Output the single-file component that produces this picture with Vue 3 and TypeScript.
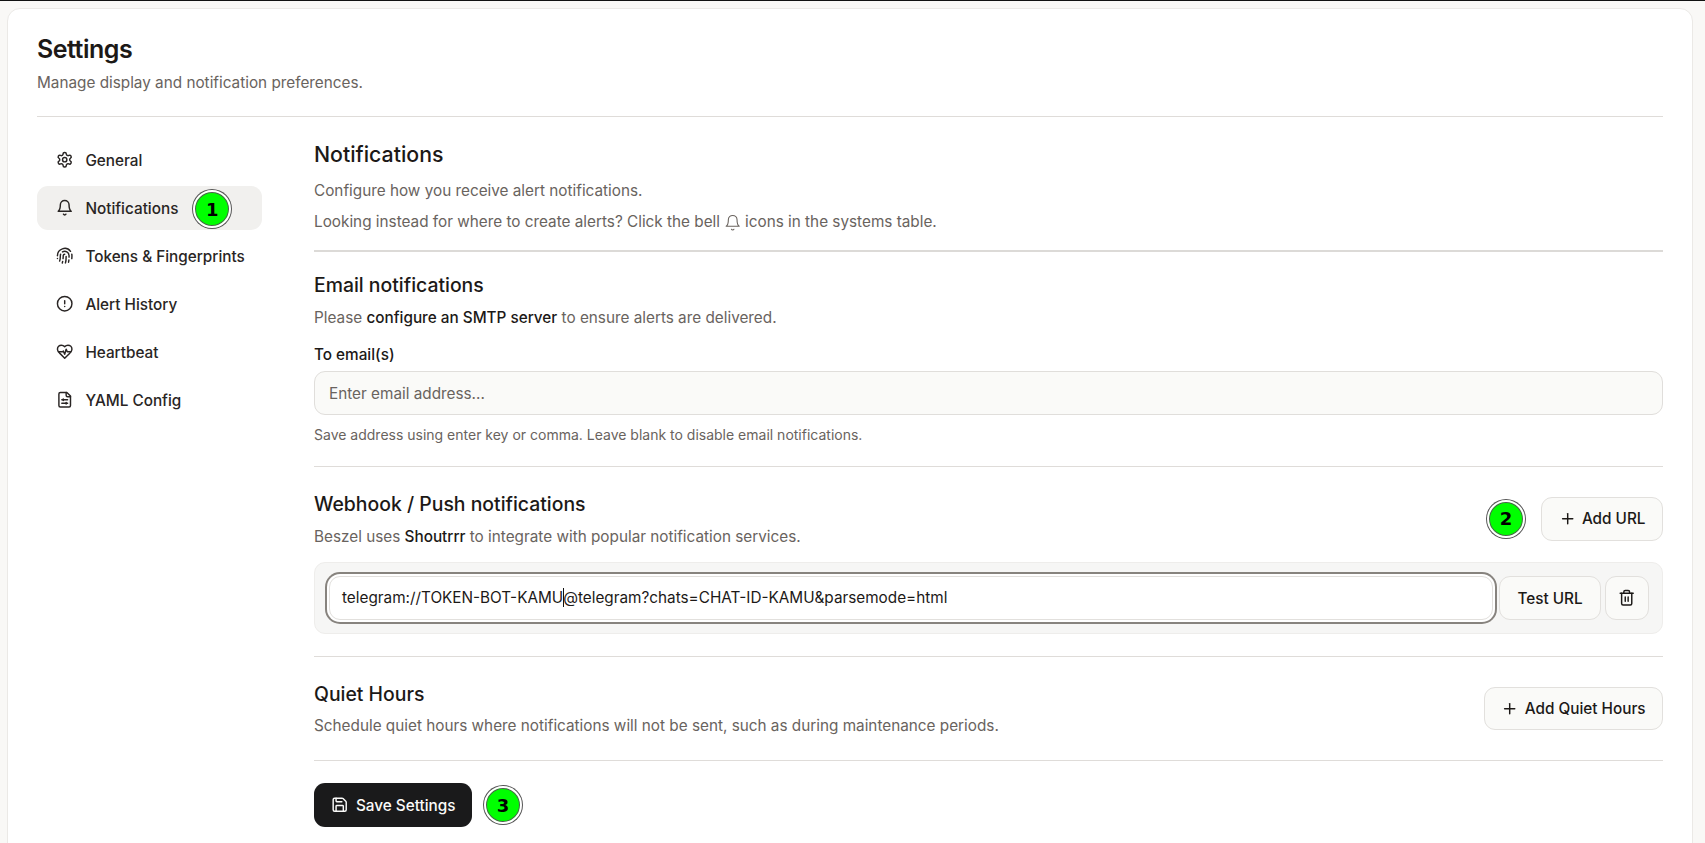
<script setup lang="ts">
const icons: Record<string, string[]> = {
  settings: [
    "M12.22 2h-.44a2 2 0 0 0-2 2v.18a2 2 0 0 1-1 1.73l-.43.25a2 2 0 0 1-2 0l-.15-.08a2 2 0 0 0-2.73.73l-.22.38a2 2 0 0 0 .73 2.73l.15.1a2 2 0 0 1 1 1.72v.51a2 2 0 0 1-1 1.74l-.15.09a2 2 0 0 0-.73 2.73l.22.38a2 2 0 0 0 2.73.73l.15-.08a2 2 0 0 1 2 0l.43.25a2 2 0 0 1 1 1.73V20a2 2 0 0 0 2 2h.44a2 2 0 0 0 2-2v-.18a2 2 0 0 1 1-1.73l.43-.25a2 2 0 0 1 2 0l.15.08a2 2 0 0 0 2.73-.73l.22-.39a2 2 0 0 0-.73-2.73l-.15-.08a2 2 0 0 1-1-1.74v-.5a2 2 0 0 1 1-1.74l.15-.09a2 2 0 0 0 .73-2.73l-.22-.38a2 2 0 0 0-2.73-.73l-.15.08a2 2 0 0 1-2 0l-.43-.25a2 2 0 0 1-1-1.73V4a2 2 0 0 0-2-2z",
    "M12 9a3 3 0 1 0 0 6 3 3 0 0 0 0-6z",
  ],
  bell: ["M6 8a6 6 0 0 1 12 0c0 7 3 9 3 9H3s3-2 3-9", "M10.3 21a1.94 1.94 0 0 0 3.4 0"],
  fingerprint: [
    "M12 10a2 2 0 0 0-2 2c0 1.02-.1 2.51-.26 4",
    "M14 13.12c0 2.38 0 6.38-1 8.88",
    "M17.29 21.02c.12-.6.43-2.3.5-3.02",
    "M2 12a10 10 0 0 1 18-6",
    "M2 16h.01",
    "M21.8 16c.2-2 .131-5.354 0-6",
    "M5 19.5C5.5 18 6 15 6 12a6 6 0 0 1 .34-2",
    "M8.65 22c.21-.66.45-1.32.57-2",
    "M9 6.8a6 6 0 0 1 9 5.2v2",
  ],
  alert: ["M12 2a10 10 0 1 0 0 20 10 10 0 0 0 0-20z", "M12 8v4", "M12 16h.01"],
  heart: [
    "M19 14c1.49-1.46 3-3.21 3-5.5A5.5 5.5 0 0 0 16.5 3c-1.76 0-3 .5-4.5 2-1.5-1.5-2.74-2-4.5-2A5.5 5.5 0 0 0 2 8.5c0 2.3 1.5 4.05 3 5.5l7 7Z",
    "M3.22 12H9.5l.5-1 2 4.5 2-7 1.5 3.5h5.27",
  ],
  file: [
    "M15 2H6a2 2 0 0 0-2 2v16a2 2 0 0 0 2 2h12a2 2 0 0 0 2-2V7Z",
    "M14 2v4a2 2 0 0 0 2 2h4",
    "M8 12h8",
    "M10 11v2",
    "M8 17h8",
    "M14 16v2",
  ],
  plus: ["M5 12h14", "M12 5v14"],
  trash: [
    "M3 6h18",
    "M19 6v14c0 1-1 2-2 2H7c-1 0-2-1-2-2V6",
    "M8 6V4c0-1 1-2 2-2h4c1 0 2 1 2 2v2",
    "M10 11v6",
    "M14 11v6",
  ],
  save: [
    "M15.2 3a2 2 0 0 1 1.4.6l3.8 3.8a2 2 0 0 1 .6 1.4V19a2 2 0 0 1-2 2H5a2 2 0 0 1-2-2V5a2 2 0 0 1 2-2z",
    "M17 21v-7a1 1 0 0 0-1-1H8a1 1 0 0 0-1 1v7",
    "M7 3v4a1 1 0 0 0 1 1h7",
  ],
};

const navItems = [
  { label: "General", icon: "settings" },
  { label: "Notifications", icon: "bell", active: true, badge: 1 },
  { label: "Tokens & Fingerprints", icon: "fingerprint" },
  { label: "Alert History", icon: "alert" },
  { label: "Heartbeat", icon: "heart" },
  { label: "YAML Config", icon: "file" },
];
</script>

<template>
  <div class="page">
    <div class="card">
      <h1>Settings</h1>
      <p class="subtitle">Manage display and notification preferences.</p>
      <hr class="rule" />

      <div class="layout">
        <nav class="sidebar">
          <a v-for="item in navItems" :key="item.label" class="nav-item" :class="{ active: item.active }">
            <svg class="icon nav-icon" viewBox="0 0 24 24"><path v-for="d in icons[item.icon]" :key="d" :d="d" /></svg>
            <span>{{ item.label }}</span>
            <span v-if="item.badge" class="badge nav-badge">{{ item.badge }}</span>
          </a>
        </nav>

        <main class="content">
          <h2>Notifications</h2>
          <p class="text intro">Configure how you receive alert notifications.</p>
          <p class="text intro-second">
            Looking instead for where to create alerts? Click the bell
            <svg class="icon inline-bell" viewBox="0 0 24 24"><path v-for="d in icons.bell" :key="d" :d="d" /></svg>
            icons in the systems table.
          </p>
          <hr class="rule thick" />

          <section class="email">
            <h3>Email notifications</h3>
            <p class="text sub">Please <b>configure an SMTP server</b> to ensure alerts are delivered.</p>
            <label class="field-label">To email(s)</label>
            <input class="email-input" placeholder="Enter email address..." />
            <p class="hint">Save address using enter key or comma. Leave blank to disable email notifications.</p>
          </section>
          <hr class="rule" />

          <section class="webhook">
            <div class="row-head">
              <div>
                <h3>Webhook / Push notifications</h3>
                <p class="text sub">Beszel uses <b>Shoutrrr</b> to integrate with popular notification services.</p>
              </div>
              <div class="head-actions">
                <span class="badge">2</span>
                <button class="btn add-url">
                  <svg class="icon" viewBox="0 0 24 24"><path v-for="d in icons.plus" :key="d" :d="d" /></svg>
                  Add URL
                </button>
              </div>
            </div>
            <div class="url-box">
              <div class="url-input">telegram://TOKEN-BOT-KAMU<span class="caret"></span>@telegram?chats=CHAT-ID-KAMU&amp;parsemode=html</div>
              <button class="btn test-btn">Test URL</button>
              <button class="btn trash-btn">
                <svg class="icon" viewBox="0 0 24 24"><path v-for="d in icons.trash" :key="d" :d="d" /></svg>
              </button>
            </div>
          </section>
          <hr class="rule" />

          <section class="quiet">
            <div class="row-head">
              <div>
                <h3>Quiet Hours</h3>
                <p class="text sub">Schedule quiet hours where notifications will not be sent, such as during maintenance periods.</p>
              </div>
              <button class="btn add-quiet">
                <svg class="icon" viewBox="0 0 24 24"><path v-for="d in icons.plus" :key="d" :d="d" /></svg>
                Add Quiet Hours
              </button>
            </div>
          </section>
          <hr class="rule" />

          <div class="save-row">
            <button class="save-btn">
              <svg class="icon" viewBox="0 0 24 24"><path v-for="d in icons.save" :key="d" :d="d" /></svg>
              Save Settings
            </button>
            <span class="badge">3</span>
          </div>
        </main>
      </div>
    </div>
  </div>
</template>

<style>
html,
body {
  margin: 0;
  height: 100%;
  overflow: hidden;
  background: #f9f8f6;
}
</style>

<style scoped>
.page {
  height: 843px;
  box-sizing: border-box;
  border-top: 1px solid #111;
  padding: 7px 12px 0 7px;
  overflow: hidden;
  font-family: Inter, "Liberation Sans", sans-serif;
  color: #1c1917;
  font-size: 15.3px;
}

.card {
  background: #fff;
  border: 1px solid #ebe9e6;
  border-radius: 13px;
  padding: 24px 29px 40px;
  min-height: 900px;
  box-sizing: border-box;
}

h1 {
  margin: 0;
  font-size: 25px;
  line-height: 32px;
  font-weight: 600;
  letter-spacing: -0.5px;
}

.subtitle {
  margin: 6px 0 0;
  line-height: 24px;
  color: #69635e;
}

.rule {
  margin: 0;
  border: 0;
  height: 1px;
  background: #dfdcd9;
}

.rule.thick {
  height: 2px;
  background: #dcdad7;
}

.subtitle + .rule {
  margin-top: 21px;
}

.layout {
  display: flex;
  gap: 52px;
  padding-top: 21px;
}

.sidebar {
  width: 225px;
  flex: none;
  display: flex;
  flex-direction: column;
  gap: 4px;
}

.nav-item {
  display: flex;
  align-items: center;
  height: 44px;
  padding-left: 18.5px;
  border-radius: 11px;
  font-weight: 500;
  color: #292524;
}

.nav-item.active {
  background: #f1f0ee;
}

.nav-icon {
  margin-right: 12.5px;
}

.nav-badge {
  margin: 2px 0 0 15px;
}

.content {
  flex: 1;
  min-width: 0;
}

.icon {
  width: 17.4px;
  height: 17.4px;
  flex: none;
  fill: none;
  stroke: currentColor;
  stroke-width: 2;
  stroke-linecap: round;
  stroke-linejoin: round;
}

h2 {
  margin: 1px 0 0;
  font-size: 21.3px;
  line-height: 30px;
  font-weight: 500;
}

h3 {
  margin: 0;
  font-size: 19.4px;
  line-height: 28px;
  font-weight: 500;
}

.text {
  margin: 0;
  line-height: 24px;
  color: #69635e;
}

.text b {
  color: #1c1917;
  font-weight: 500;
}

.intro {
  margin-top: 10px;
}

.intro-second {
  margin: 7px 0 16px;
}

.inline-bell {
  width: 17.4px;
  height: 17.4px;
  vertical-align: -4px;
  stroke-width: 1.5;
  margin-right: -1px;
}

.sub {
  margin-top: 7px;
}

.email {
  padding: 19px 0 21px;
}

.field-label {
  display: block;
  margin-top: 15px;
  line-height: 20px;
  font-weight: 500;
}

.email-input {
  display: block;
  width: 100%;
  box-sizing: border-box;
  height: 44px;
  margin-top: 6px;
  padding: 0 14px;
  background: #fafaf8;
  border: 1px solid #e0dedb;
  border-radius: 11px;
  font: inherit;
  outline: none;
}

.email-input::placeholder {
  color: #69635e;
  opacity: 1;
}

.hint {
  margin: 10px 0 0;
  font-size: 14px;
  line-height: 20px;
  color: #69635e;
}

.webhook {
  padding: 23px 0 22px;
}

.row-head {
  display: flex;
  align-items: center;
  justify-content: space-between;
}

.head-actions {
  display: flex;
  align-items: center;
  gap: 16px;
  margin-top: -2px;
}

.btn {
  display: inline-flex;
  align-items: center;
  justify-content: center;
  gap: 6px;
  box-sizing: border-box;
  height: 44px;
  padding: 0;
  background: #fafaf8;
  border: 1px solid #e2e0dd;
  border-radius: 11px;
  font: inherit;
  font-weight: 500;
  color: #1c1917;
}

.add-url {
  width: 122px;
}

.add-quiet {
  width: 179px;
  height: 43px;
  margin-top: -1px;
}

.url-box {
  display: flex;
  align-items: center;
  margin-top: 13px;
  height: 72px;
  box-sizing: border-box;
  padding: 0 13px 0 14px;
  background: #f6f6f5;
  border: 1px solid #eeedeb;
  border-radius: 11px;
}

.url-input {
  flex: 1;
  min-width: 0;
  height: 44px;
  box-sizing: border-box;
  line-height: 42px;
  padding: 0 12px;
  background: #fff;
  border: 1px solid #e2e0dd;
  border-radius: 11px;
  box-shadow: 0 0 0 2px #fff, 0 0 0 4px #87837e;
  white-space: nowrap;
}

.caret {
  display: inline-block;
  width: 1px;
  height: 19px;
  margin-right: -1px;
  background: #111;
  vertical-align: -4px;
}

.test-btn {
  width: 102px;
  margin-left: 6px;
}

.trash-btn {
  width: 44px;
  margin-left: 4px;
}

.quiet {
  padding: 23px 0 22px;
}

.quiet .sub {
  margin-top: 6px;
}

.save-row {
  display: flex;
  align-items: center;
  gap: 12px;
  margin-top: 22px;
}

.save-btn {
  display: inline-flex;
  align-items: center;
  justify-content: center;
  gap: 8px;
  width: 158px;
  height: 44px;
  padding: 0;
  border: 0;
  border-radius: 11px;
  background: #1a1a1b;
  color: #fafaf9;
  font: inherit;
  font-weight: 500;
}

.badge {
  display: inline-flex;
  align-items: center;
  justify-content: center;
  flex: none;
  box-sizing: border-box;
  width: 38px;
  height: 38px;
  border-radius: 50%;
  background: #00ff00;
  border: 2px solid #fff;
  box-shadow: 0 0 0 1px #555, inset 0 0 0 1px #555;
  font-family: "DejaVu Sans", sans-serif;
  font-size: 18px;
  font-weight: 700;
  color: #000;
}
</style>
